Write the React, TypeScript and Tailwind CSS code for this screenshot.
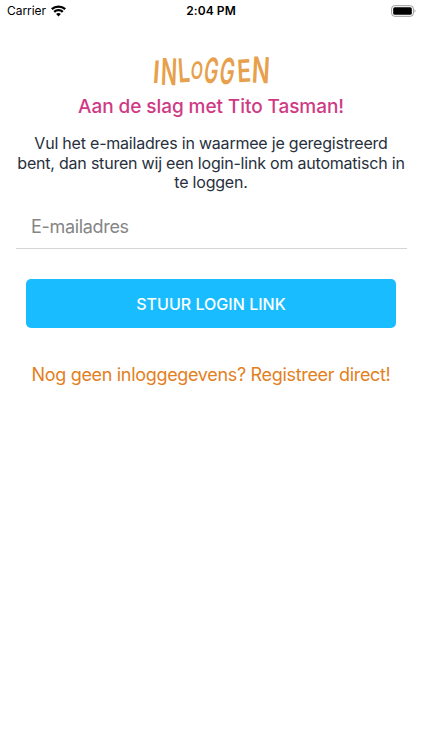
import { useState } from "react";

const letters = [
  { char: "I", style: "w-[7px] text-[31px] rotate-[4deg] scale-x-[.8]" },
  { char: "N", style: "w-[18px] text-[37px] rotate-[2deg] scale-x-[.58]" },
  { char: "L", style: "w-[12px] text-[33px] -rotate-[4deg] scale-x-[.64] -translate-y-[1px]" },
  { char: "O", style: "w-[14px] text-[24px] rotate-[8deg] scale-x-[.66]" },
  { char: "G", style: "w-[15px] text-[35px] -skew-x-[14deg] scale-x-[.54] -translate-y-[1px]" },
  { char: "G", style: "w-[17px] text-[36px] -skew-x-[14deg] scale-x-[.55]" },
  { char: "E", style: "w-[16px] text-[31px] -rotate-[3deg] scale-x-[.74] -translate-y-[1px]" },
  { char: "N", style: "w-[18px] text-[36px] rotate-[3deg] scale-x-[.66] -translate-y-[1px]" },
];

const StatusBar = () => (
  <header className="relative flex h-[22px] items-center justify-between pl-[7px] pr-[6px] text-black">
    <div className="flex items-center gap-[5px]">
      <span className="text-[12px] tracking-[-0.05px]">Carrier</span>
      <svg width="15" height="12" viewBox="0 0 15 12" fill="none" stroke="currentColor" strokeWidth="2.3">
        <path d="M.8 4.1C4.5.7 10.5.7 14.2 4.1" />
        <path d="M3.2 6.9c2.4-2.3 6.2-2.3 8.6 0" />
        <path d="M5.1 8.9c1.4-1.2 3.4-1.2 4.8 0L7.5 11.5z" fill="currentColor" stroke="none" />
      </svg>
    </div>
    <span className="absolute inset-x-0 text-center text-[12px] font-semibold tracking-[0.1px]">2:04 PM</span>
    <svg width="25" height="12" viewBox="0 0 25 12">
      <rect x=".6" y=".7" width="21.8" height="10.6" rx="3" fill="none" stroke="#999" />
      <rect x="2.2" y="2.2" width="18.6" height="7.6" rx="1.6" fill="#000" />
      <path d="M23.6 4.2c1.2.7 1.2 2.9 0 3.6z" fill="#999" />
    </svg>
  </header>
);

const App = () => {
  const [email, setEmail] = useState("");

  return (
    <div className="min-h-[750px] w-full bg-white font-['Inter',sans-serif]">
      <StatusBar />
      <main className="flex flex-col px-4 pt-[28px] text-center">
        <h1 className="flex h-[42px] items-center justify-center font-semibold leading-none text-[#e7a04b]" aria-label="Inloggen">
          {letters.map((letter, i) => (
            <span key={i} className={`flex justify-center ${letter.style}`}>{letter.char}</span>
          ))}
        </h1>
        <h2 className="mt-px h-7 whitespace-nowrap text-[19px] font-medium leading-7 tracking-[-0.07px] text-[#cf3a85]">
          Aan de slag met Tito Tasman!
        </h2>
        <p className="mt-[13px] whitespace-nowrap text-[16px] leading-[19.5px] tracking-[-0.21px] text-[#28303d]">
          Vul het e-mailadres in waarmee je geregistreerd
          <br />
          bent, dan sturen wij een login-link om automatisch in
          <br />
          te loggen.
        </p>
        <input
          type="email"
          placeholder="E-mailadres"
          value={email}
          onChange={(e) => setEmail(e.target.value)}
          className="mt-[13px] h-[43px] w-[391px] border-b border-b-[#d4d4d4] px-[15px] text-[18px] tracking-[-0.32px] text-[#28303d] outline-none placeholder:text-[#858585]"
        />
        <button className="mx-[10px] mt-[30px] h-[49px] rounded-[5px] bg-[#19bdff] pt-px text-[16px] font-medium tracking-[0.02px] text-white">
          STUUR LOGIN LINK
        </button>
        <a href="#" className="mt-[33px] whitespace-nowrap text-[18px] leading-7 tracking-[-0.32px] text-[#e3801e]">
          Nog geen inloggegevens? Registreer direct!
        </a>
      </main>
    </div>
  );
};

export default App;
